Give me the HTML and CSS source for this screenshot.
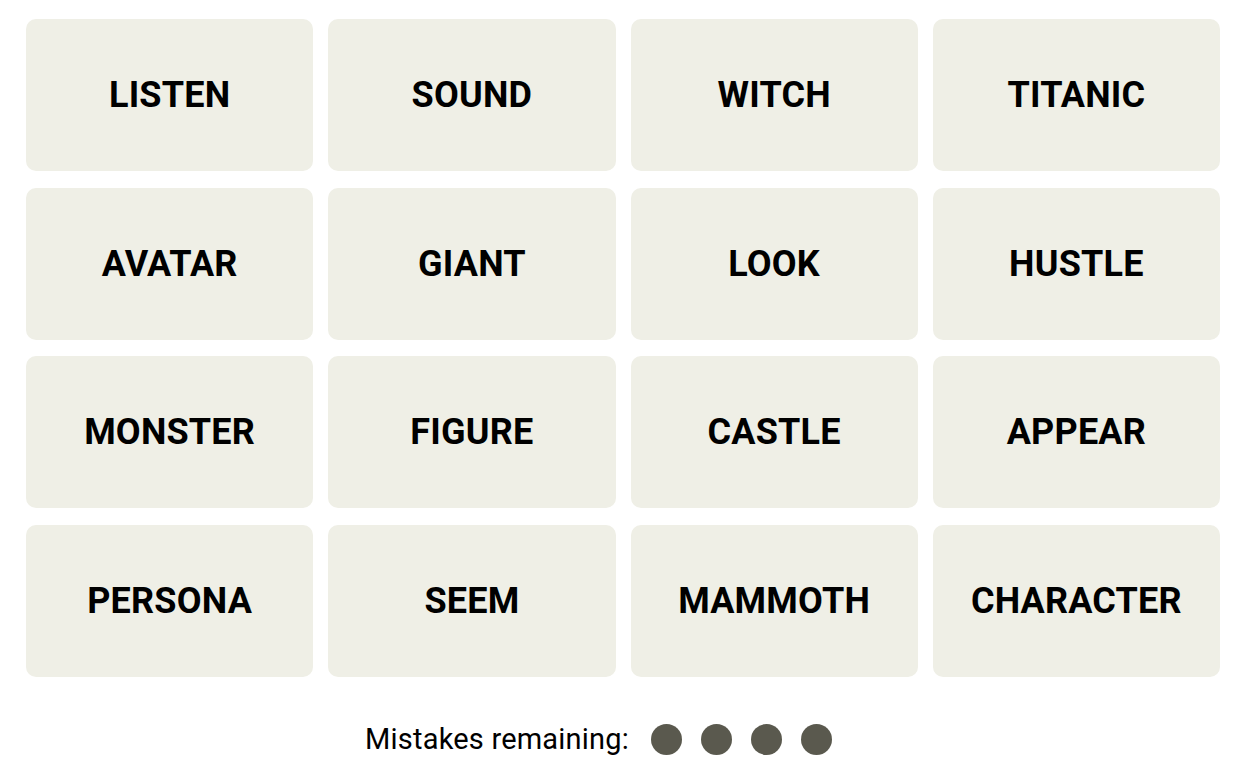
FILE: index.html
```html
<!DOCTYPE html>
<html lang="en">
<head>
    <meta charset="UTF-8">
    <title>Connections</title>
    <link rel="stylesheet" href="styles.css">
</head>
<body>
    <main class="game">
        <!-- Board -->
        <section class="board">
            <div class="tile">LISTEN</div>
            <div class="tile">SOUND</div>
            <div class="tile">WITCH</div>
            <div class="tile">TITANIC</div>
            <div class="tile">AVATAR</div>
            <div class="tile">GIANT</div>
            <div class="tile">LOOK</div>
            <div class="tile">HUSTLE</div>
            <div class="tile">MONSTER</div>
            <div class="tile">FIGURE</div>
            <div class="tile">CASTLE</div>
            <div class="tile">APPEAR</div>
            <div class="tile">PERSONA</div>
            <div class="tile">SEEM</div>
            <div class="tile">MAMMOTH</div>
            <div class="tile">CHARACTER</div>
        </section>

        <!-- Mistakes -->
        <div class="mistakes">
            <span class="mistakes-label">Mistakes remaining:</span>
            <span class="dot"></span>
            <span class="dot"></span>
            <span class="dot"></span>
            <span class="dot"></span>
        </div>
    </main>
</body>
</html>
```

FILE: styles.css
```css
* {
    margin: 0;
    padding: 0;
    box-sizing: border-box;
}

body {
    background: #ffffff;
    font-family: 'Roboto', 'Liberation Sans', sans-serif;
    color: #000;
}

.game {
    padding: 19px 30px 0 26px;
}

/* Board */
.board {
    display: grid;
    grid-template-columns: repeat(4, 1fr);
    grid-template-rows: repeat(4, 152px);
    column-gap: 15px;
    row-gap: 16.7px;
}

.tile {
    background: #efefe6;
    border-radius: 10px;
    display: flex;
    align-items: center;
    justify-content: center;
    font-size: 36px;
    font-weight: 700;
    letter-spacing: 0.2px;
}

/* Mistakes */
.mistakes {
    display: flex;
    align-items: center;
    justify-content: center;
    padding-right: 49px;
    margin-top: 45px;
}

.mistakes-label {
    font-size: 29px;
    letter-spacing: 0.2px;
    margin-right: 22px;
}

.dot {
    width: 31px;
    height: 31px;
    border-radius: 50%;
    background: #5a594e;
    margin-right: 19px;
}

.dot:last-child {
    margin-right: 0;
}
```
